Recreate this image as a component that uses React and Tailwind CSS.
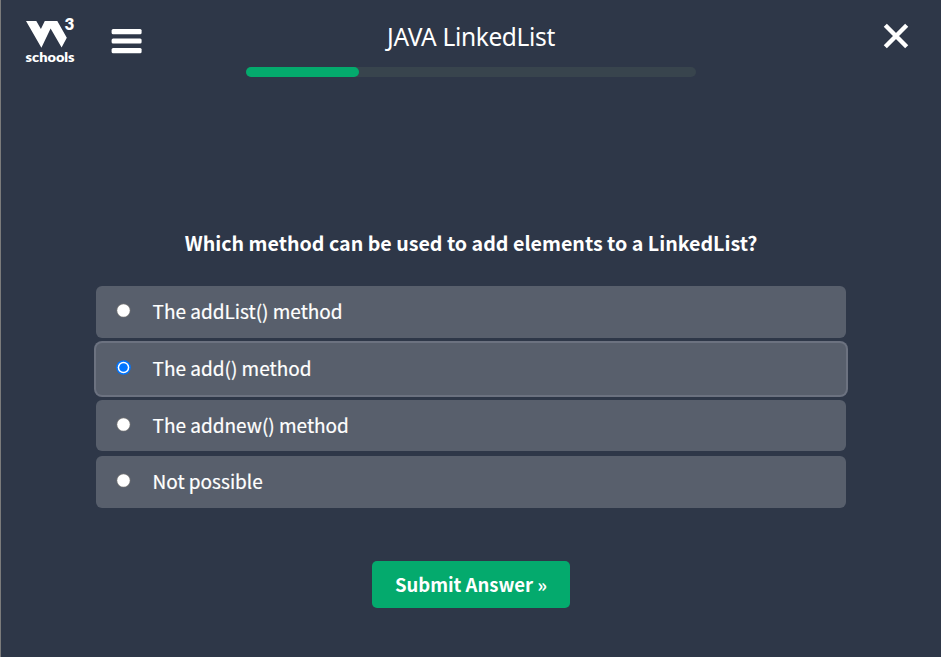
const options = [
  { label: 'The addList() method', row: 'h-[52px]' },
  { label: 'The add() method', row: 'h-[52px] mt-[5px]', selected: true },
  { label: 'The addnew() method', row: 'h-[51px] mt-[5px] pt-[1px]' },
  { label: 'Not possible', row: 'h-[52px] mt-[5px]' },
];

function Logo() {
  return (
    <svg className="h-[56px] w-[52px] shrink-0 overflow-visible" viewBox="24 10 52 56" fill="#fff">
      <path d="M26 21H36.3L40.9 29L44.8 21H57.3L66.8 37.8L61.6 47.6L50.6 28.6L41.4 47.8Z" />
      <text x="64.6" y="30" fontSize="17.5" fontWeight="800" fontFamily="Lato, sans-serif" textLength="9.8" lengthAdjust="spacingAndGlyphs">3</text>
      <text x="25.6" y="62" fontSize="13.2" fontWeight="800" fontFamily="Lato, sans-serif" textLength="49" lengthAdjust="spacingAndGlyphs">schools</text>
    </svg>
  );
}

function Radio({ selected }) {
  return (
    <svg className="h-[15px] w-[15px]" viewBox="0 0 15 15">
      <circle cx="7.5" cy="7.5" r={selected ? 7.3 : 7} fill={selected ? '#0075ff' : '#767676'} />
      <circle cx="7.5" cy="7.5" r={selected ? 5.8 : 6.3} fill="#fff" />
      {selected && <circle cx="7.5" cy="7.5" r="4.3" fill="#0075ff" />}
    </svg>
  );
}

export default function App() {
  return (
    <div className="h-[657px] w-[941px] overflow-hidden border-l border-[#7b7b7b] bg-[#2e3748] font-['Noto_Sans_CJK_SC',sans-serif] text-white">
      <header className="flex h-[90px] items-start pl-[23px] pr-[32px]">
        <div className="flex w-[222px] shrink-0 pt-[10px]">
          <Logo />
          <svg className="ml-[35px] mt-[17px] h-[28px] w-[32px]" viewBox="0 0 32 28" fill="#fff">
            <rect x="0.6" y="2" width="30" height="5.2" rx="1.5" />
            <rect x="0.6" y="11.4" width="30" height="5.2" rx="1.5" />
            <rect x="0.6" y="21" width="30" height="5.2" rx="1.5" />
          </svg>
        </div>
        <div className="w-[450px]">
          <h1 className="h-[67px] pt-[20px] text-center font-['Noto_Sans',sans-serif] text-[24.5px] leading-[34px] tracking-[-0.35px] whitespace-nowrap">
            JAVA LinkedList
          </h1>
          <div className="h-[10px] rounded-full bg-[#38444d]">
            <div className="h-full w-1/4 rounded-full bg-[#04aa6d]" />
          </div>
        </div>
        <button className="ml-auto mt-[23px]">
          <svg className="h-[26px] w-[26px]" viewBox="0 0 26 26" stroke="#fff" strokeWidth="4.4" strokeLinecap="butt">
            <path d="M2.3 2.3L23.7 23.7M23.7 2.3L2.3 23.7" />
          </svg>
        </button>
      </header>
      <main className="flex flex-col items-center pt-[136px]">
        <h2 className="h-[60px] text-[19.65px] leading-[34px] font-bold whitespace-nowrap">
          Which method can be used to add elements to a LinkedList?
        </h2>
        <div className="w-[750px]">
          {options.map((o) => (
            <label
              key={o.label}
              className={`flex items-center rounded-[6px] bg-[#585f6c] pl-[20px] ${o.row} ${o.selected ? 'ring-2 ring-[#6c7280]' : ''}`}
            >
              <span className="-mt-[2.5px]"><Radio selected={o.selected} /></span>
              <span className="ml-[21.5px] -mt-[2.2px] text-[19px] leading-[30px] whitespace-nowrap [-webkit-text-stroke:0.2px_white]">{o.label}</span>
            </label>
          ))}
        </div>
        <button className="mt-[53px] h-[47px] w-[198px] rounded-[5px] bg-[#04aa6d] pb-[2px] text-[18.5px] leading-[30px] font-bold whitespace-nowrap">
          Submit Answer »
        </button>
      </main>
    </div>
  );
}
